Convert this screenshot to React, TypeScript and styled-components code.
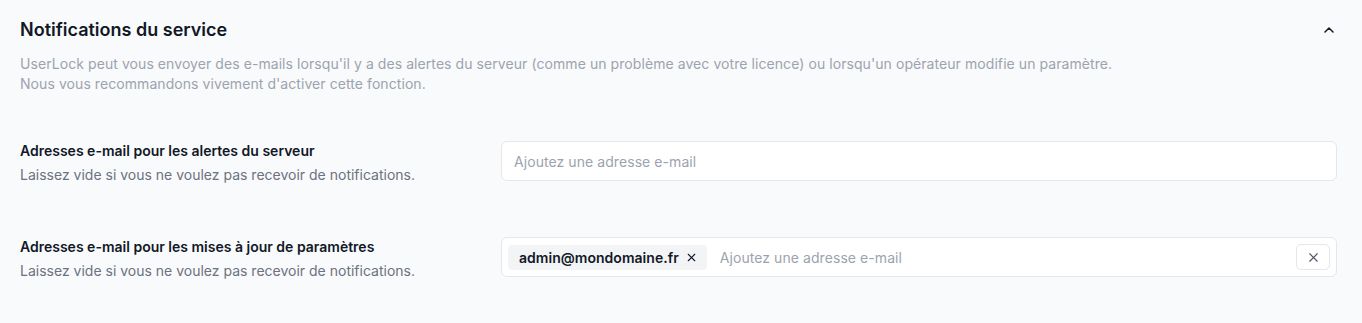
import React from "react";
import styled, { createGlobalStyle } from "styled-components";
import { ChevronUp, X } from "lucide-react";

const Global = createGlobalStyle`
  html, body { margin: 0; padding: 0; background: #f9fafb; }
  body { font-family: Inter, "Noto Sans", sans-serif; -webkit-font-smoothing: antialiased; }
  * { box-sizing: border-box; }
`;

const Section = styled.section`
  padding: 16px 25px 0 20px;
  display: flex;
  flex-direction: column;
`;

const Header = styled.div`
  display: flex;
  align-items: center;
  justify-content: space-between;
`;

const Title = styled.h2`
  margin: 0;
  font-size: 18px;
  line-height: 28px;
  font-weight: 600;
  color: #111827;
`;

const Toggle = styled.button`
  border: none;
  background: none;
  padding: 0;
  display: flex;
  color: #111827;
  cursor: pointer;
`;

const Description = styled.p`
  margin: 10px 0 0;
  font-size: 14px;
  line-height: 20px;
  letter-spacing: 0.07px;
  color: #9ca3af;
`;

const Rows = styled.div`
  display: flex;
  flex-direction: column;
  gap: 52px;
  margin-top: 47px;
`;

const Row = styled.div`
  display: grid;
  grid-template-columns: 481px 1fr;
  align-items: start;
`;

const Label = styled.div`
  font-size: 14px;
  line-height: 20px;
  font-weight: 600;
  color: #111827;
`;

const Hint = styled.div`
  margin-top: 4px;
  font-size: 14px;
  line-height: 20px;
  color: #6b7280;
`;

const Field = styled.div<{ $hasTags?: boolean }>`
  display: flex;
  align-items: center;
  gap: 13px;
  height: 40px;
  padding: ${(p) => (p.$hasTags ? "0 6px" : "0 12px")};
  background: #fff;
  border: 1px solid #e5e7eb;
  border-radius: 6px;
`;

const Input = styled.input`
  flex: 1;
  min-width: 0;
  border: none;
  outline: none;
  background: transparent;
  padding: 0;
  font-family: inherit;
  font-size: 14px;
  letter-spacing: 0.07px;
  color: #111827;
  &::placeholder { color: #9ca3af; }
`;

const Tag = styled.span`
  display: inline-flex;
  align-items: center;
  gap: 6px;
  height: 25px;
  padding: 0 9px 0 11px;
  background: #f3f4f6;
  border-radius: 4px;
  font-size: 14px;
  font-weight: 600;
  letter-spacing: 0.03px;
  color: #111827;
`;

const TagRemove = styled.button`
  border: none;
  background: none;
  padding: 0;
  display: flex;
  color: #111827;
`;

const ClearButton = styled.button`
  width: 34px;
  height: 26px;
  display: flex;
  align-items: center;
  justify-content: center;
  background: #fff;
  border: 1px solid #e5e7eb;
  border-radius: 5px;
  color: #4b5563;
  padding: 0;
`;

export default function App() {
  return (
    <>
      <Global />
      <Section>
        <Header>
          <Title>Notifications du service</Title>
          <Toggle aria-label="Réduire">
            <ChevronUp size={16} strokeWidth={2.25} />
          </Toggle>
        </Header>
        <Description>
          UserLock peut vous envoyer des e-mails lorsqu'il y a des alertes du serveur (comme un problème avec votre licence) ou lorsqu'un opérateur modifie un paramètre.
          <br />
          Nous vous recommandons vivement d'activer cette fonction.
        </Description>
        <Rows>
          <Row>
            <div>
              <Label>Adresses e-mail pour les alertes du serveur</Label>
              <Hint>Laissez vide si vous ne voulez pas recevoir de notifications.</Hint>
            </div>
            <Field>
              <Input placeholder="Ajoutez une adresse e-mail" />
            </Field>
          </Row>
          <Row>
            <div>
              <Label>Adresses e-mail pour les mises à jour de paramètres</Label>
              <Hint>Laissez vide si vous ne voulez pas recevoir de notifications.</Hint>
            </div>
            <Field $hasTags>
              <Tag>
                admin@mondomaine.fr
                <TagRemove aria-label="Retirer">
                  <X size={13} strokeWidth={2} />
                </TagRemove>
              </Tag>
              <Input placeholder="Ajoutez une adresse e-mail" />
              <ClearButton aria-label="Effacer">
                <X size={15} strokeWidth={1.75} />
              </ClearButton>
            </Field>
          </Row>
        </Rows>
      </Section>
    </>
  );
}
